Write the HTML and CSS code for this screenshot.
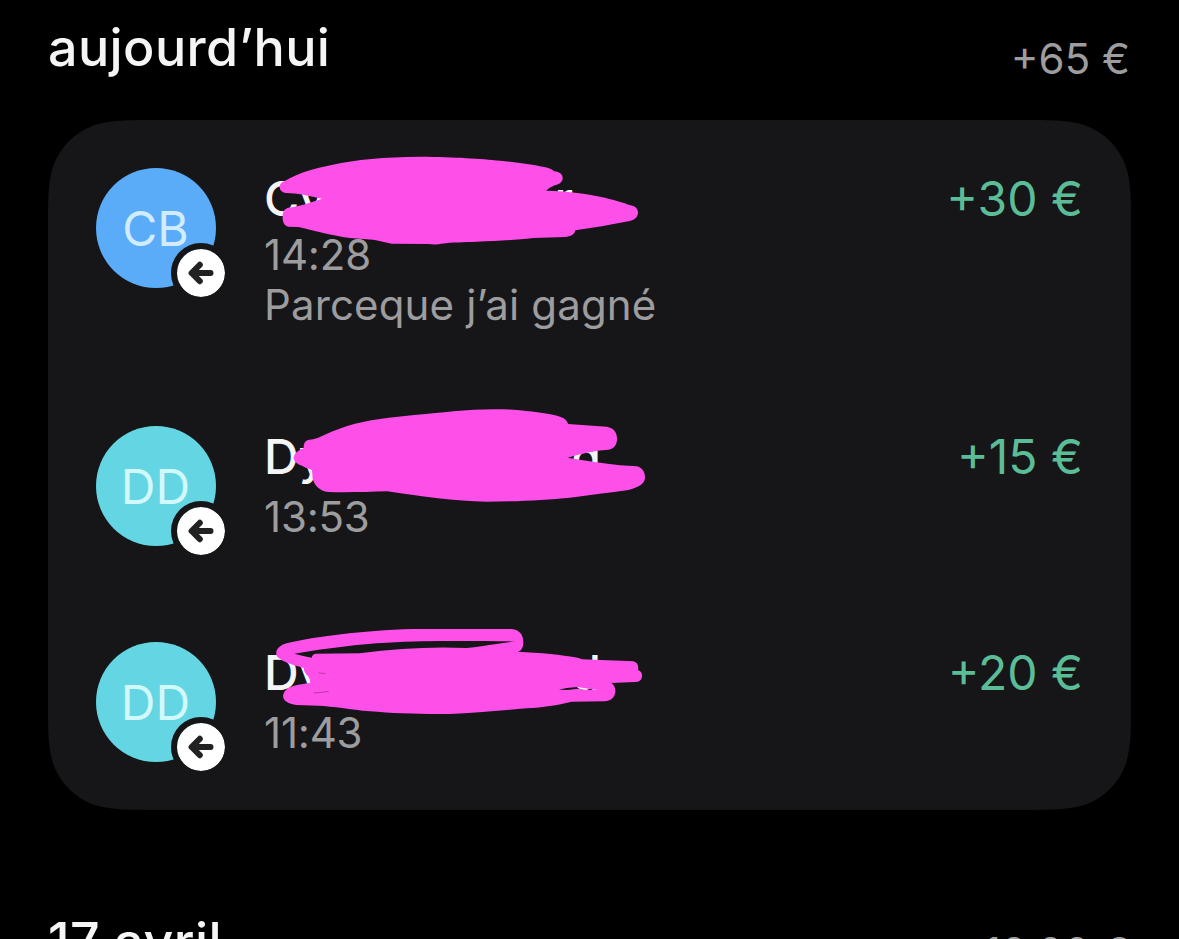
FILE: index.html
```html
<!DOCTYPE html>
<html lang="fr">
<head>
    <meta charset="UTF-8">
    <meta name="viewport" content="width=device-width, initial-scale=1.0">
    <title>Transactions</title>
    <link rel="stylesheet" href="styles.css">
</head>
<body>
    <section class="day">
        <header class="day-header">
            <h2>aujourd’hui</h2>
            <span class="day-total">+65 €</span>
        </header>

        <div class="card">
            <div class="transaction">
                <div class="avatar blue">
                    <span class="initials">CB</span>
                    <span class="badge">
                        <svg viewBox="0 0 48 48"><path d="M33.500 24H14.800M22.800 15.800L14.600 24l8.200 8.200"/></svg>
                    </span>
                </div>
                <div class="details">
                    <div class="name name-short"><span>Cy</span><span>r</span></div>
                    <div class="meta">14:28</div>
                    <div class="meta note">Parceque j’ai gagné</div>
                </div>
                <div class="amount">+30 €</div>
                <svg class="marker marker-first" viewBox="0 0 1260 600">
                    <path d="M103 124C150 96 200 84 245 75C320 58 400 51 510 50C620 51 690 56 750 62C810 68 860 75 895 84Q908 88 912 94C930 96 938 104 938 114C938 126 928 133 914 136Q900 142 888 152C960 154 1010 162 1050 170C1090 179 1120 188 1142 196C1158 199 1165 209 1164 220C1162 234 1150 242 1135 244C1080 254 1030 264 976 271C974 284 962 290 945 291L850 294C790 300 740 303 680 305C640 307 610 306 574 311Q560 315 535 312L425 311C405 308 392 302 370 299L300 294C240 286 190 271 145 261L115 260C103 258 98 246 98 234C97 218 102 206 115 203C145 200 180 188 216 176C180 168 140 159 108 159C94 157 88 148 89 139Q91 128 103 124Z"/>
                </svg>
            </div>

            <div class="transaction">
                <div class="avatar teal">
                    <span class="initials">DD</span>
                    <span class="badge">
                        <svg viewBox="0 0 48 48"><path d="M33.500 24H14.800M22.800 15.800L14.600 24l8.200 8.200"/></svg>
                    </span>
                </div>
                <div class="details">
                    <div class="name name-long"><span>Dy</span><span>d</span></div>
                    <div class="meta">13:53</div>
                </div>
                <div class="amount">+15 €</div>
                <svg class="marker marker-second" viewBox="0 0 1260 480">
                    <path d="M174 150Q190 148 203 144C260 116 320 96 390 87C460 78 540 71 610 64C680 57 750 55 810 61C860 66 900 71 930 80Q951 87 954 102L1070 110C1092 114 1101 128 1101 146C1101 164 1092 177 1075 179C1030 182 990 191 953 203C1010 212 1060 220 1110 226L1160 229C1177 233 1186 247 1185 265C1183 282 1166 292 1135 300C1080 308 1020 315 960 323C890 329 800 335 710 335C610 334 520 320 412 304C350 306 290 308 235 306C208 302 194 287 188 266L186 240Q170 236 156 227C139 222 132 213 131 204C132 192 143 181 161 175Q160 154 174 150Z"/>
                </svg>
            </div>

            <div class="transaction">
                <div class="avatar teal">
                    <span class="initials">DD</span>
                    <span class="badge">
                        <svg viewBox="0 0 48 48"><path d="M33.500 24H14.800M22.800 15.800L14.600 24l8.200 8.200"/></svg>
                    </span>
                </div>
                <div class="details">
                    <div class="name name-long"><span>Dy</span><span>d</span></div>
                    <div class="meta">11:43</div>
                </div>
                <div class="amount">+20 €</div>
                <svg class="marker marker-third" viewBox="0 0 1260 480">
                    <path fill-rule="evenodd" d="M110 100C200 79 330 62 490 57L785 57C808 59 820 74 820 96C820 113 814 123 803 125C870 128 940 135 975 142Q986 144 996 148L1150 154C1162 157 1167 168 1164 180C1174 183 1177 191 1176 201C1174 211 1167 216 1155 216L1084 219C1093 225 1097 235 1096 247C1093 264 1082 273 1064 274L965 275C920 286 880 292 830 295C750 302 670 310 600 312C510 313 430 310 360 304C300 298 250 289 205 287L140 285C114 282 100 272 99 258C101 240 117 229 145 224Q165 221 181 218Q181 208 174 198Q162 188 161 174C120 162 89 151 80 137C74 122 88 105 110 100ZM133 131C230 114 330 102 410 98C540 91 690 94 799 94C760 97 700 109 650 114C550 109 440 115 330 130L197 131Q187 133 185 143Q158 138 133 131ZM926 239L950 234L982 231L1015 236L1042 238L1010 240L984 236L953 240Z"/>
                    <path class="thin" d="M206 188Q215 191 226 190M190 249Q215 248 236 244"/>
                </svg>
            </div>
        </div>
    </section>

    <section class="day">
        <header class="day-header">
            <h2>17 avril</h2>
            <span class="day-total">+10,00 €</span>
        </header>
    </section>
</body>
</html>
```

FILE: styles.css
```css
* {
    box-sizing: border-box;
}
body {
    margin: 0;
    height: 939px;
    padding: 0 48px;
    overflow: hidden;
    background-color: #000;
    color: #f5f5f5;
    font-family: Inter, sans-serif;
}
.day {
    margin-bottom: 84px;
}
.day-header {
    display: flex;
    justify-content: space-between;
    align-items: flex-start;
    height: 120px;
}
h2 {
    margin: 16px 0 0;
    font-size: 52px;
    font-weight: 500;
    letter-spacing: 0.4px;
    line-height: 64px;
}
.day-total {
    margin-top: 34px;
    padding-right: 1px;
    font-size: 42px;
    line-height: 50px;
    color: #9d9d9f;
}
.card {
    display: flex;
    flex-direction: column;
    gap: 96px;
    height: 690px;
    padding: 48px;
    background-color: #161618;
    /* smooth iOS-like corners */
    clip-path: path("M110 0H973C1004.600 0 1020.500 0 1037.500 5.400C1056.200 12.200 1070.800 26.800 1077.600 45.500C1083 62.500 1083 78.400 1083 110V580C1083 611.600 1083 627.500 1077.600 644.500C1070.800 663.200 1056.200 677.800 1037.500 684.600C1020.500 690 1004.600 690 973 690H110C78.400 690 62.500 690 45.500 684.600C26.800 677.800 12.200 663.200 5.400 644.500C0 627.500 0 611.600 0 580V110C0 78.400 0 62.500 5.400 45.500C12.200 26.800 26.800 12.200 45.500 5.400C62.500 0 78.400 0 110 0Z");
}
.transaction {
    position: relative;
    display: flex;
    align-items: flex-start;
}
.avatar {
    position: relative;
    display: flex;
    flex: none;
    align-items: center;
    justify-content: center;
    width: 120px;
    height: 120px;
    margin-right: 48px;
    padding: 1px 1px 0 0;
    border-radius: 50%;
    font-size: 48px;
}
.blue {
    background-color: #5aacf8;
    color: #d2ecff;
}
.teal {
    background-color: #64d6e3;
    color: #d2f8fc;
}
.initials {
    line-height: 60px;
}
.badge {
    position: absolute;
    right: -15px;
    bottom: -15px;
    width: 60px;
    height: 60px;
    border: 6px solid #161618;
    border-radius: 50%;
    background-color: #fff;
    background-clip: padding-box;
}
.badge svg {
    display: block;
    width: 48px;
    height: 48px;
    fill: none;
    stroke: #222;
    stroke-width: 6;
    stroke-linecap: round;
    stroke-linejoin: round;
}
.details {
    flex: 1;
    height: 120px;
}
.transaction:first-child .details {
    height: 162px;
}
.name {
    display: flex;
    justify-content: space-between;
    margin-bottom: 5px;
    font-size: 48px;
    font-weight: 500;
    line-height: 61px;
}
.name-short {
    width: 309px;
    margin-bottom: 1px;
}
.name-long {
    width: 337px;
}
.meta {
    font-size: 42px;
    line-height: 50px;
    letter-spacing: -0.2px;
    color: #9d9d9f;
}
.note {
    letter-spacing: 0.15px;
}
.amount {
    font-size: 48px;
    line-height: 61px;
    color: #5bbd98;
}
/* marker strokes over the names */
.marker {
    position: absolute;
    left: 154px;
    width: 420px;
    height: 160px;
    fill: #ff4fe9;
}
.marker-first {
    top: -28px;
    height: 200px;
}
.marker-second {
    top: -36px;
}
.marker-third {
    top: -32px;
}
.thin {
    fill: none;
    stroke: #8f3188;
    stroke-width: 2;
}
```
